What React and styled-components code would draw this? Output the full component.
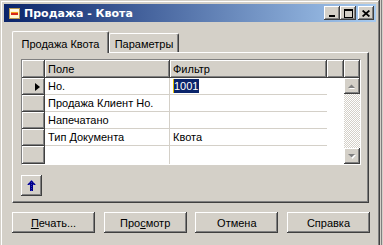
import React from 'react';
import styled, { createGlobalStyle, css } from 'styled-components';

const GlobalStyle = createGlobalStyle`
  html, body { margin: 0; padding: 0; background: #d4d0c8; overflow: hidden; }
  body { font-family: "Liberation Sans", Arial, sans-serif; font-size: 11px; color: #000; }
  * { box-sizing: border-box; }
`;

const raised = css`
  background: #d4d0c8;
  box-shadow: inset -1px -1px #404040, inset 1px 1px #ffffff, inset -2px -2px #808080;
`;

const Screen = styled.div`
  display: flex;
  width: 383px;
  height: 245px;
  overflow: hidden;
`;

const Window = styled.div`
  flex: 0 0 379px;
  height: 252px;
  padding: 4px;
  display: flex;
  flex-direction: column;
  background: #d4d0c8;
  box-shadow: inset -1px -1px #404040, inset 1px 1px #d4d0c8, inset -2px -2px #808080, inset 2px 2px #ffffff;
`;

const BackEdge = styled.div`
  flex: 1;
  margin-left: 1px;
  border-left: 1px solid #808080;
`;

const TitleBar = styled.div`
  height: 18px;
  display: flex;
  align-items: center;
  padding: 0 2px;
  background: linear-gradient(to right, #0a246a, #a6caf0);
  color: #fff;
`;

const TitleIcon = styled.span`
  width: 16px;
  height: 16px;
  display: flex;
  align-items: center;
  justify-content: center;
  margin-right: 2px;
`;

const TitleText = styled.span`
  flex: 1;
  font-family: "DejaVu Sans", sans-serif;
  font-weight: bold;
  font-size: 11px;
  white-space: nowrap;
`;

const CaptionButtons = styled.div`
  display: flex;
  align-items: center;
`;

const CaptionButton = styled.div`
  ${raised};
  width: 16px;
  height: 14px;
  display: flex;
  align-items: center;
  justify-content: center;
  margin-left: ${p => p.$gap || 0}px;
`;

const Content = styled.div`
  display: flex;
  flex-direction: column;
  padding: 9px 6px 0 8px;
`;

const TabRow = styled.div`
  display: flex;
  align-items: flex-end;
  height: 21px;
  position: relative;
  z-index: 1;
`;

const Tab = styled.div`
  width: ${p => p.$width}px;
  height: ${p => (p.$active ? 22 : 19)}px;
  margin-bottom: ${p => (p.$active ? -1 : 0)}px;
  padding-top: ${p => (p.$active ? 6 : 4)}px;
  text-align: center;
  background: #d4d0c8;
  border-top: 1px solid #fff;
  border-left: 1px solid #fff;
  border-right: 1px solid #404040;
  border-radius: 2px 2px 0 0;
  box-shadow: inset -1px 0 #808080;
  white-space: nowrap;
`;

const Panel = styled.div`
  width: 357px;
  height: 151px;
  padding: 6px 0 0 8px;
  border-top: 1px solid #fff;
  border-left: 1px solid #fff;
  border-right: 1px solid #404040;
  border-bottom: 1px solid #404040;
  box-shadow: inset -1px -1px #808080;
  display: flex;
  flex-direction: column;
  align-items: flex-start;
`;

const GridFrame = styled.div`
  width: 340px;
  height: 106px;
  border-top: 1px solid #808080;
  border-left: 1px solid #808080;
  border-right: 1px solid #fff;
  border-bottom: 1px solid #fff;
`;

const Grid = styled.div`
  display: grid;
  grid-template-columns: 23px 125px 157px 17px 16px;
  grid-template-rows: 18px 17px 17px 17px 17px 18px;
  background: #fff;
  height: 100%;
`;

const HeaderCell = styled.div`
  ${raised};
  display: flex;
  align-items: center;
  padding-left: 3px;
  white-space: nowrap;
`;

const SelectorCell = styled.div`
  ${raised};
  display: flex;
  align-items: center;
  justify-content: flex-end;
  padding-right: 5px;
`;

const RowPointer = styled.span`
  width: 0;
  height: 0;
  border-top: 4px solid transparent;
  border-bottom: 4px solid transparent;
  border-left: 5px solid #000;
`;

const DataCell = styled.div`
  background: #fff;
  display: flex;
  align-items: center;
  padding-left: 3px;
  white-space: nowrap;
  border-bottom: ${p => (p.$last ? 'none' : '1px solid #d4d0c8')};
  border-right: ${p => (p.$divider ? '1px solid #d4d0c8' : 'none')};
`;

const BlankCell = styled.div`
  background: #fff;
`;

const Selection = styled.span`
  background: #0a246a;
  color: #fff;
  height: 14px;
  line-height: 14px;
  padding: 0 1px 0 0;
  border-left: 1px solid #e8c000;
`;

const ScrollBar = styled.div`
  grid-column: 5;
  grid-row: 2 / span 5;
  display: flex;
  flex-direction: column;
`;

const ScrollButton = styled.div`
  ${raised};
  width: 16px;
  height: 16px;
  display: flex;
  align-items: center;
  justify-content: center;
`;

const ScrollTrack = styled.div`
  flex: 1;
  background: repeating-conic-gradient(#d4d0c8 0% 25%, #ffffff 0% 50%) 0 0 / 2px 2px;
`;

const IconButton = styled.div`
  ${raised};
  width: 21px;
  height: 21px;
  margin-top: 10px;
  display: flex;
  align-items: center;
  justify-content: center;
`;

const ButtonRow = styled.div`
  width: 358px;
  margin-top: 9px;
  display: flex;
  justify-content: space-between;
`;

const Button = styled.div`
  ${raised};
  width: 83px;
  height: 21px;
  display: flex;
  align-items: center;
  justify-content: center;
  white-space: nowrap;
`;

const DisabledArrow = ({ up }) => (
  <svg width="8" height="5" viewBox="0 0 8 5">
    {up ? (
      <>
        <polygon points="1,5 4,2 7,5" fill="#fff" />
        <polygon points="0,4 3.5,0.5 7,4" fill="#808080" />
      </>
    ) : (
      <>
        <polygon points="1,1 8,1 4.5,5" fill="#fff" />
        <polygon points="0,0 7,0 3.5,3.5" fill="#808080" />
      </>
    )}
  </svg>
);

const AppIcon = () => (
  <svg width="11" height="11" viewBox="0 0 11 11">
    <rect x="0.5" y="0.5" width="10" height="10" fill="#fff8d0" stroke="#b89850" />
    <rect x="1" y="1" width="9" height="2" fill="#fffbe8" />
    <rect x="2" y="4" width="7" height="1" fill="#f0a020" />
    <rect x="2" y="5" width="7" height="2" fill="#d82818" />
  </svg>
);

const UpArrowIcon = () => (
  <svg width="9" height="11" viewBox="0 0 9 11">
    <defs>
      <pattern id="dither" width="2" height="2" patternUnits="userSpaceOnUse">
        <rect width="2" height="2" fill="#000080" />
        <rect width="1" height="1" fill="#2a2ad0" />
      </pattern>
    </defs>
    <polygon points="4.5,0 9,5 6,5 6,11 3,11 3,5 0,5" fill="url(#dither)" />
  </svg>
);

const rows = [
  { field: 'Но.', value: '1001', current: true },
  { field: 'Продажа Клиент Но.', value: '' },
  { field: 'Напечатано', value: '' },
  { field: 'Тип Документа', value: 'Квота' },
  { field: '', value: '' },
];

export default function App() {
  return (
    <Screen>
      <GlobalStyle />
      <Window>
        <TitleBar>
          <TitleIcon><AppIcon /></TitleIcon>
          <TitleText>Продажа - Квота</TitleText>
          <CaptionButtons>
            <CaptionButton>
              <svg width="8" height="7" viewBox="0 0 8 7"><rect x="1" y="5" width="6" height="2" fill="#000" /></svg>
            </CaptionButton>
            <CaptionButton>
              <svg width="9" height="9" viewBox="0 0 9 9"><path d="M0 0H9V9H0Z M1 2V8H8V2Z" fill="#000" fillRule="evenodd" /></svg>
            </CaptionButton>
            <CaptionButton $gap={2}>
              <svg width="8" height="7" viewBox="0 0 8 7"><path d="M0.6 0.5L7.4 6.5M7.4 0.5L0.6 6.5" stroke="#000" strokeWidth="1.7" /></svg>
            </CaptionButton>
          </CaptionButtons>
        </TitleBar>
        <Content>
          <TabRow>
            <Tab $active $width={97}>Продажа Квота</Tab>
            <Tab $width={70}>Параметры</Tab>
          </TabRow>
          <Panel>
            <GridFrame>
              <Grid>
                <HeaderCell />
                <HeaderCell>Поле</HeaderCell>
                <HeaderCell>Фильтр</HeaderCell>
                <HeaderCell />
                <HeaderCell />
                {rows.map((r, i) => (
                  <React.Fragment key={i}>
                    <SelectorCell>{r.current && <RowPointer />}</SelectorCell>
                    <DataCell $divider $last={i === rows.length - 1}>{r.field}</DataCell>
                    <DataCell $last={i === rows.length - 1}>
                      {r.current ? <Selection>{r.value}</Selection> : r.value}
                    </DataCell>
                    <BlankCell />
                  </React.Fragment>
                ))}
                <ScrollBar>
                  <ScrollButton><DisabledArrow up /></ScrollButton>
                  <ScrollTrack />
                  <ScrollButton><DisabledArrow /></ScrollButton>
                </ScrollBar>
              </Grid>
            </GridFrame>
            <IconButton><UpArrowIcon /></IconButton>
          </Panel>
          <ButtonRow>
            <Button><u>П</u>ечать...</Button>
            <Button>Про<u>с</u>мотр</Button>
            <Button>Отмена</Button>
            <Button>Справка</Button>
          </ButtonRow>
        </Content>
      </Window>
      <BackEdge />
    </Screen>
  );
}
